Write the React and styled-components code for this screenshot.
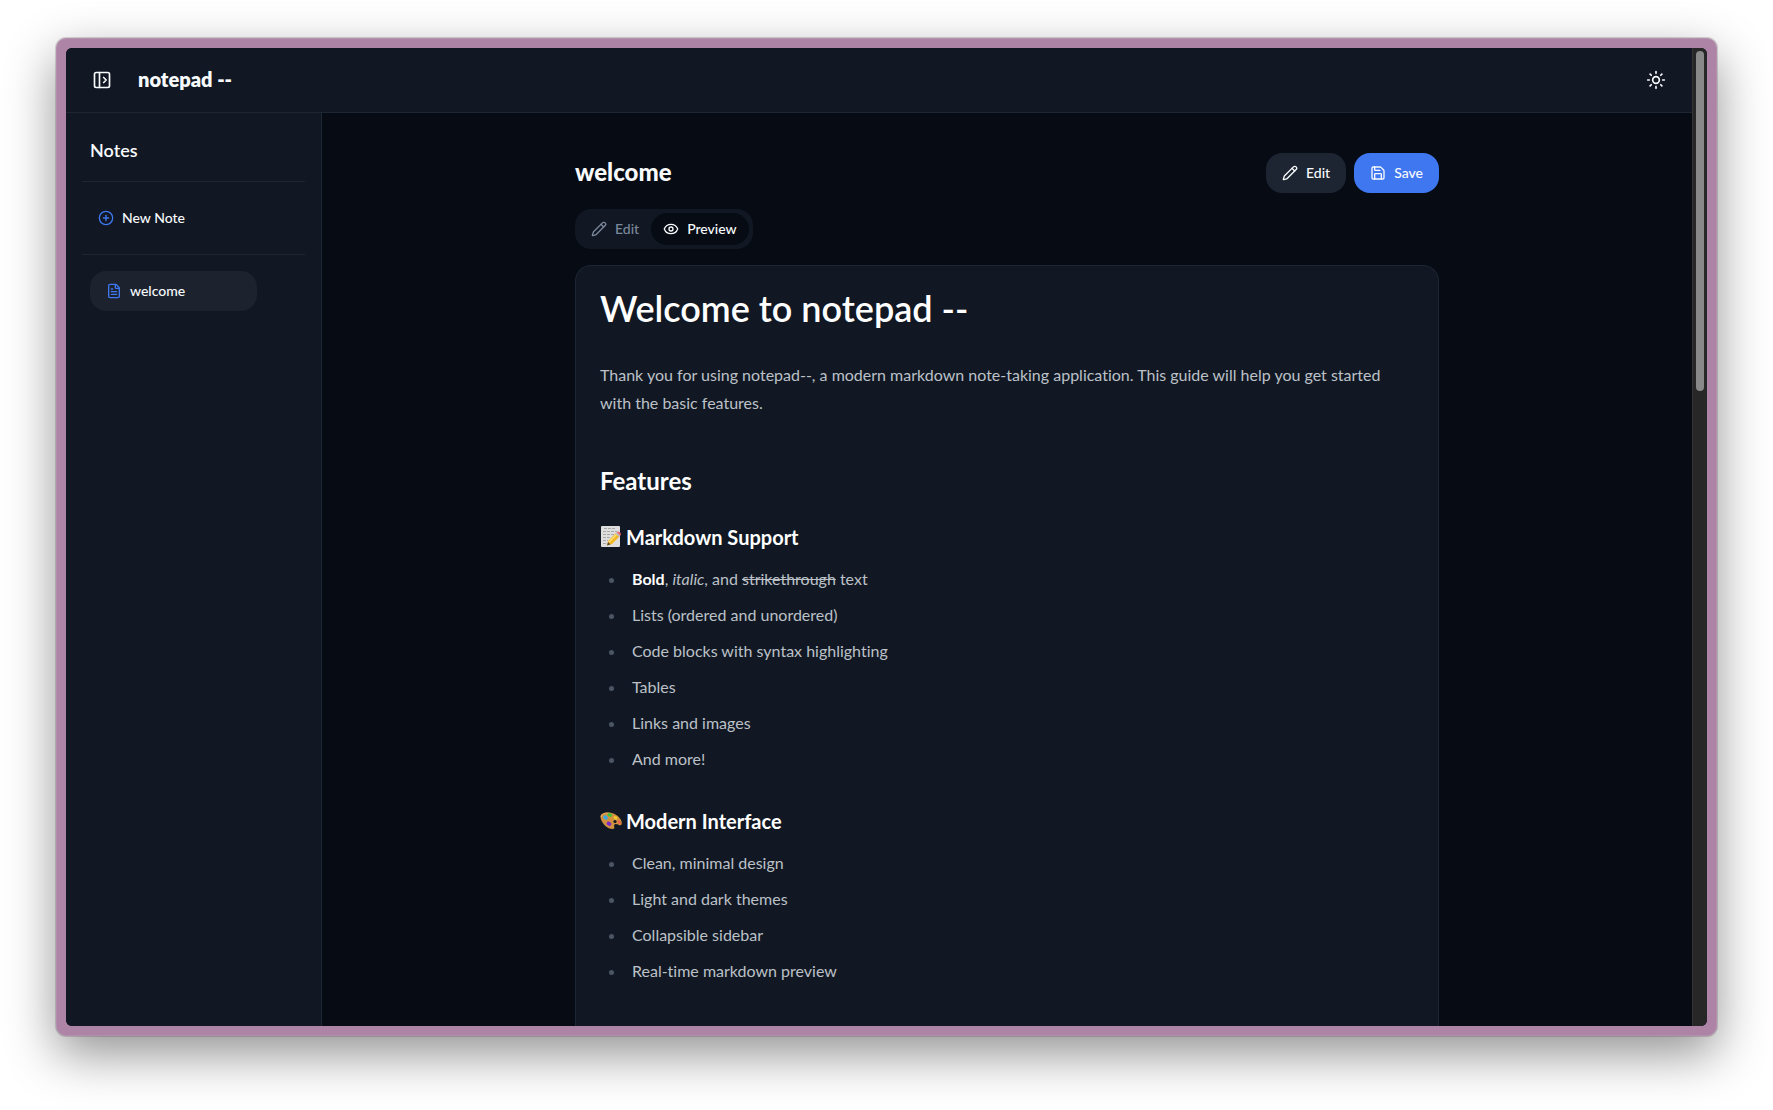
import React from "react";
import styled, { createGlobalStyle } from "styled-components";
import { PanelLeftOpen, Sun, CirclePlus, FileText, Pencil, Save, Eye } from "lucide-react";

const color = {
  panel: "#111823",
  page: "#060b14",
  line: "#1d2633",
  raised: "#1d2432",
  selected: "#1c232f",
  accent: "#3f77f0",
  text: "#f8fafc",
  body: "#bcc1c8",
  muted: "#7b889c",
};

const GlobalStyle = createGlobalStyle`
  * { box-sizing: border-box; }
  body {
    margin: 0;
    background: #ffffff;
    color: ${color.text};
    font-family: Lato, "Open Sans", sans-serif;
    font-size: 14px;
    font-variant-ligatures: none;
    -webkit-font-smoothing: antialiased;
  }
  button { font: inherit; color: inherit; border: 0; background: none; cursor: pointer; }
  h1, h2, h3, p, ul { margin: 0; }
`;

const Desktop = styled.div`
  display: flex;
  height: 100vh;
  padding: 38px 56px 74px;
`;

const Frame = styled.div`
  flex: 1;
  display: flex;
  min-width: 0;
  padding: 9px;
  border: 1px solid #b48fae;
  border-radius: 10px;
  background: #ae84a6;
  box-shadow: 0 0 0 1px rgba(0, 0, 0, 0.15), 0 18px 50px rgba(0, 0, 0, 0.43);
`;

const Viewport = styled.div`
  flex: 1;
  display: flex;
  min-width: 0;
  overflow: hidden;
  border-radius: 6px;
  background: ${color.page};
`;

const Application = styled.div`
  flex: 1;
  min-width: 0;
  display: flex;
  flex-direction: column;
`;

const ScrollTrack = styled.div`
  width: 15px;
  padding: 3px;
  background: #272727;
  border-left: 1px solid #343434;
`;

const ScrollThumb = styled.div`
  height: 35%;
  width: 8px;
  border-radius: 4px;
  background: #898989;
`;

const Header = styled.header`
  display: flex;
  align-items: center;
  gap: 16px;
  height: 65px;
  padding: 0 16px;
  flex-shrink: 0;
  background: ${color.panel};
  border-bottom: 1px solid ${color.line};
`;

const Brand = styled.h1`
  flex: 1;
  padding-bottom: 2px;
  font-size: 20px;
  line-height: 28px;
  font-weight: 800;
`;

const IconButton = styled.button`
  display: grid;
  place-items: center;
  width: 40px;
  height: 40px;
  padding: 0;
`;

const Body = styled.div`
  flex: 1;
  display: flex;
  min-height: 0;
`;

const Sidebar = styled.aside`
  width: 256px;
  flex-shrink: 0;
  padding: 16px;
  background: ${color.panel};
  border-right: 1px solid ${color.line};
`;

const SidebarTitle = styled.h2`
  padding: 7px 8px 17px;
  font-size: 18px;
  line-height: 28px;
  font-weight: 600;
`;

const SidebarSection = styled.div`
  padding: 16px ${(p) => (p.$inset ? "8px" : "0")};
  border-top: 1px solid ${color.line};
`;

const SidebarButton = styled.button`
  display: flex;
  align-items: center;
  gap: 8px;
  width: ${(p) => (p.$selected ? "167px" : "100%")};
  height: 40px;
  padding: 0 16px;
  border-radius: 16px;
  font-weight: 500;
  text-align: left;
  background: ${(p) => (p.$selected ? color.selected : "transparent")};
  svg { color: ${color.accent}; }
`;

const Label = styled.span`
  padding-bottom: 2px;
`;

const Main = styled.main`
  flex: 1;
  min-width: 0;
  display: flex;
  justify-content: center;
  padding: 40px 16px 0;
  overflow: hidden;
`;

const Column = styled.div`
  width: 100%;
  max-width: 864px;
  display: flex;
  flex-direction: column;
  gap: 16px;
`;

const TitleRow = styled.div`
  display: flex;
  align-items: center;
  justify-content: space-between;
`;

const NoteTitle = styled.h2`
  padding-bottom: 2px;
  font-size: 24px;
  line-height: 32px;
  font-weight: 900;
`;

const Actions = styled.div`
  display: flex;
  gap: 8px;
`;

const ActionButton = styled.button`
  display: flex;
  align-items: center;
  gap: 8px;
  height: 40px;
  padding: 0 16px;
  border-radius: 16px;
  font-weight: 500;
  background: ${(p) => (p.$primary ? color.accent : color.raised)};
`;

const Tabs = styled.div`
  display: flex;
  align-self: flex-start;
  padding: 4px;
  border-radius: 16px;
  background: ${color.panel};
`;

const Tab = styled.button`
  display: flex;
  align-items: center;
  gap: 8px;
  height: 32px;
  padding: 0 12px;
  border-radius: 16px;
  font-weight: 500;
  color: ${(p) => (p.$active ? color.text : color.muted)};
  background: ${(p) => (p.$active ? color.page : "transparent")};
`;

const Article = styled.article`
  flex: 1;
  padding: 23px 24px 0;
  border: 1px solid ${color.line};
  border-bottom: 0;
  border-radius: 16px 16px 0 0;
  background: ${color.panel};
  color: ${color.body};
  font-size: 16px;
  line-height: 28px;
  font-weight: 400;

  h1, h2, h3, strong { color: #ffffff; }
  strong { font-weight: 700; }
  h1 { font-size: 36px; line-height: 38px; font-weight: 600; margin-bottom: 34px; }
  h2 { font-size: 24px; line-height: 32px; font-weight: 700; margin: 48px 0 24px; }
  h3 {
    display: flex;
    align-items: center;
    gap: 4px;
    font-size: 20px;
    line-height: 32px;
    font-weight: 700;
    margin-bottom: 12px;
  }
  ul { padding-left: 26px; margin-bottom: 32px; }
  li { padding-left: 6px; }
  li + li { margin-top: 8px; }
  li::marker { color: #4b5563; }
`;

const MemoEmoji = () => (
  <svg width="22" height="24" viewBox="0 0 22 24" role="img" aria-label="memo">
    <rect x="1" y="1" width="19" height="21" rx="1" fill="#dedede" />
    <g stroke="#a8a8a8" strokeWidth="1" strokeDasharray="3 1">
      <path d="M4 3.500h12M3 6.500h14M3 9.500h11M3 12.500h8M3 15.500h5M3 18.500h3" />
    </g>
    <path d="M7 20.500l1.500-5L16 8l3.500 3.500-7.500 7.500z" fill="#f3b724" />
    <path d="M9 17l8-8" stroke="#ffe27a" strokeWidth="1.500" />
    <path d="M7 20.500l1-3.400 2.500 2.300z" fill="#5a4a35" />
    <path d="M15.500 8.500l1.200-1.200 3.500 3.500-1.200 1.200z" fill="#b9bcc0" />
    <path d="M16.700 7.300q2-1.500 3.500.2t0 3.300z" fill="#ef6a6f" />
  </svg>
);

const PaletteEmoji = () => (
  <svg width="22" height="24" viewBox="0 0 22 24" role="img" aria-label="palette">
    <path
      d="M.5 8C.3 4.500 4 3 9.500 3.500c6.500.8 12.300 6 12.300 10.500 0 2.500-1.700 2.800-3.300 1.800-1.800-1.200-3.700-1.300-4.300.3-.5 1.600 1.300 3.600-1.200 3.900C7.500 20.500 1 14 .5 8z"
      fill="#cf9140"
    />
    <path d="M1.200 8C1.200 5 5 3.800 9.500 4.300" fill="none" stroke="#e3ae62" strokeWidth="1" />
    <circle cx="15" cy="12.500" r="1.600" fill="#101723" />
    <ellipse cx="5.500" cy="8.500" rx="2.500" ry="1.900" transform="rotate(35 5.500 8.500)" fill="#36a9e6" />
    <ellipse cx="9.800" cy="6" rx="2.300" ry="1.700" transform="rotate(20 9.800 6)" fill="#35c63b" />
    <ellipse cx="15.500" cy="8.800" rx="2.200" ry="1.500" transform="rotate(35 15.500 8.800)" fill="#f6c92a" />
    <ellipse cx="19.300" cy="13.300" rx="1.300" ry="2" transform="rotate(-35 19.300 13.300)" fill="#f0604a" />
    <ellipse cx="9" cy="14.800" rx="2.500" ry="2" transform="rotate(25 9 14.800)" fill="#7a28c9" />
  </svg>
);

export default function App() {
  return (
    <>
      <GlobalStyle />
      <Desktop>
        <Frame>
          <Viewport>
            <Application>
              <Header>
                <IconButton aria-label="Toggle sidebar">
                  <PanelLeftOpen size={20} />
                </IconButton>
                <Brand>notepad --</Brand>
                <IconButton aria-label="Toggle theme">
                  <Sun size={20} />
                </IconButton>
              </Header>
              <Body>
                <Sidebar>
                  <SidebarTitle>Notes</SidebarTitle>
                  <SidebarSection>
                    <SidebarButton>
                      <CirclePlus size={16} />
                      <Label>New Note</Label>
                    </SidebarButton>
                  </SidebarSection>
                  <SidebarSection $inset>
                    <SidebarButton $selected>
                      <FileText size={16} />
                      <Label>welcome</Label>
                    </SidebarButton>
                  </SidebarSection>
                </Sidebar>
                <Main>
                  <Column>
                    <TitleRow>
                      <NoteTitle>welcome</NoteTitle>
                      <Actions>
                        <ActionButton>
                          <Pencil size={16} />
                          <Label>Edit</Label>
                        </ActionButton>
                        <ActionButton $primary>
                          <Save size={16} />
                          <Label>Save</Label>
                        </ActionButton>
                      </Actions>
                    </TitleRow>
                    <Tabs role="tablist">
                      <Tab role="tab" aria-selected="false">
                        <Pencil size={16} />
                        <Label>Edit</Label>
                      </Tab>
                      <Tab role="tab" aria-selected="true" $active>
                        <Eye size={16} />
                        <Label>Preview</Label>
                      </Tab>
                    </Tabs>
                    <Article>
                      <h1>Welcome to notepad --</h1>
                      <p>
                        Thank you for using notepad--, a modern markdown note-taking application. This
                        guide will help you get started with the basic features.
                      </p>
                      <h2>Features</h2>
                      <h3>
                        <MemoEmoji />
                        Markdown Support
                      </h3>
                      <ul>
                        <li>
                          <strong>Bold</strong>, <em>italic</em>, and <del>strikethrough</del> text
                        </li>
                        <li>Lists (ordered and unordered)</li>
                        <li>Code blocks with syntax highlighting</li>
                        <li>Tables</li>
                        <li>Links and images</li>
                        <li>And more!</li>
                      </ul>
                      <h3>
                        <PaletteEmoji />
                        Modern Interface
                      </h3>
                      <ul>
                        <li>Clean, minimal design</li>
                        <li>Light and dark themes</li>
                        <li>Collapsible sidebar</li>
                        <li>Real-time markdown preview</li>
                      </ul>
                    </Article>
                  </Column>
                </Main>
              </Body>
            </Application>
            <ScrollTrack>
              <ScrollThumb />
            </ScrollTrack>
          </Viewport>
        </Frame>
      </Desktop>
    </>
  );
}
